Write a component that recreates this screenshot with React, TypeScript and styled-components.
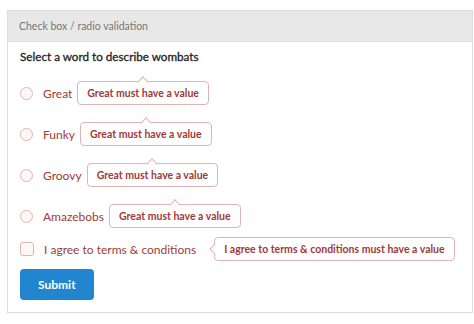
import React from "react";
import styled, { createGlobalStyle } from "styled-components";

const Global = createGlobalStyle`
  html, body { margin: 0; padding: 0; background: #fff; }
  body { font-family: Lato, "Open Sans", "Liberation Sans", sans-serif; }
  * { box-sizing: border-box; }
`;

const Panel = styled.div`
  margin: 10px 0 0 7px;
  width: 466px;
  border: 1px solid #dcdcdc;
  background: #fff;
`;

const Header = styled.div`
  height: 31px;
  background: #e8e8e8;
  border-bottom: 1px solid #e0e0e0;
  display: flex;
  align-items: center;
  padding: 0 11px;
  font-size: 10.5px;
  color: #777;
`;

const Body = styled.div`
  padding: 6px 12px 12px 12px;
  display: flex;
  flex-direction: column;
  align-items: flex-start;
`;

const Title = styled.div`
  font-size: 11.7px;
  line-height: 16px;
  font-weight: 400;
  color: #1e1e1e;
  -webkit-text-stroke: 0.3px #1e1e1e;
  margin-bottom: 9px;
`;

const Row = styled.div<{ $arrowUp?: boolean }>`
  box-sizing: content-box;
  display: flex;
  align-items: center;
  height: 24px;
  padding-top: ${(p) => (p.$arrowUp ? 8 : 0)}px;
  margin-bottom: ${(p) => (p.$arrowUp ? 9 : 0)}px;
`;

const Radio = styled.span`
  width: 13px;
  height: 13px;
  border-radius: 50%;
  border: 1px solid #e0b4b4;
  background: #fff6f6;
  flex: none;
`;

const Check = styled.span`
  width: 14px;
  height: 14px;
  border-radius: 3px;
  border: 1px solid #e0b4b4;
  background: #fff6f6;
  flex: none;
`;

const Label = styled.span`
  margin-left: 10px;
  font-size: 12px;
  color: #9f3a38;
  white-space: nowrap;
`;

const Prompt = styled.span<{ $dir: "up" | "left" }>`
  position: relative;
  margin-left: ${(p) => (p.$dir === "left" ? 18 : 5)}px;
  height: 24px;
  line-height: 22px;
  padding: 0 9px;
  border: 1px solid #e0b4b4;
  border-radius: 4px;
  background: #fff;
  font-size: 10.5px;
  font-weight: 700;
  color: #9f3a38;
  white-space: nowrap;

  &::before {
    content: "";
    position: absolute;
    width: 7px;
    height: 7px;
    background: #fff;
    border-style: solid;
    border-color: #e0b4b4;
    border-width: 1px 0 0 1px;
    ${(p) =>
      p.$dir === "up"
        ? `top: -4.5px; left: 50%; transform: translateX(-50%) rotate(45deg);`
        : `left: -4.5px; top: 50%; transform: translateY(-50%) rotate(-45deg);`}
  }
`;

const Button = styled.button`
  margin-top: 8px;
  height: 31px;
  padding: 0 18px;
  border: none;
  border-radius: 4px;
  background: #2185d0;
  color: #fff;
  font-family: inherit;
  font-size: 12px;
  font-weight: 700;
`;

const options = ["Great", "Funky", "Groovy", "Amazebobs"];

export default function App() {
  return (
    <>
      <Global />
      <Panel>
        <Header>Check box / radio validation</Header>
        <Body>
          <Title>Select a word to describe wombats</Title>
          {options.map((o) => (
            <Row key={o} $arrowUp>
              <Radio />
              <Label>{o}</Label>
              <Prompt $dir="up">Great must have a value</Prompt>
            </Row>
          ))}
          <Row>
            <Check />
            <Label>I agree to terms &amp; conditions</Label>
            <Prompt $dir="left">I agree to terms &amp; conditions must have a value</Prompt>
          </Row>
          <Button>Submit</Button>
        </Body>
      </Panel>
    </>
  );
}
